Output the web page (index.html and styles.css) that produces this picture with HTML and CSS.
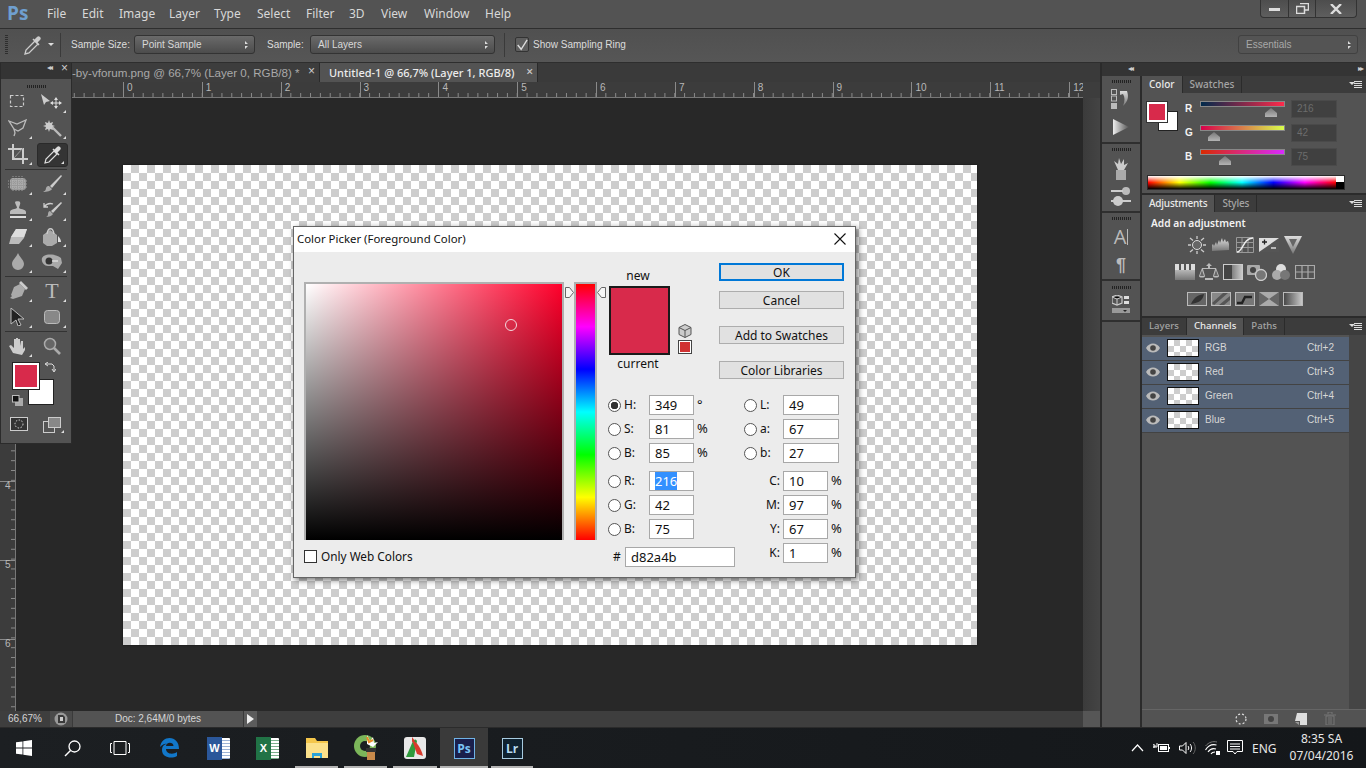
FILE: index.html
```html
<!DOCTYPE html>
<html lang="en">
<head>
<meta charset="utf-8">
<title>Photoshop Color Picker</title>
<link rel="stylesheet" href="styles.css">
</head>
<body>
<svg class="defs" aria-hidden="true"><defs>
<linearGradient id="gh"><stop offset="0" stop-color="#eee"/><stop offset="1" stop-color="#555"/></linearGradient>
<linearGradient id="gh2"><stop offset="0" stop-color="#444"/><stop offset="1" stop-color="#ccc"/></linearGradient>
<linearGradient id="gv" x2="0" y2="1"><stop offset="0" stop-color="#ddd"/><stop offset="1" stop-color="#777"/></linearGradient>
</defs></svg>
<div class="app">
  <header class="menubar">
    <span class="logo">Ps</span>
    <nav class="menu"><span>File</span><span>Edit</span><span>Image</span><span>Layer</span><span>Type</span><span>Select</span><span>Filter</span><span>3D</span><span>View</span><span>Window</span><span>Help</span></nav>
    <div class="winctl">
      <span class="wbtn w1"><svg width="11" height="4"><rect width="11" height="3" y="1" fill="#ddd"/></svg></span>
      <span class="wbtn w2"><svg width="13" height="11"><path d="M4 .5h8.500v6.500H9M.5 3.500h8v7h-8z" fill="none" stroke="#ddd" stroke-width="1.500"/></svg></span>
      <span class="wbtn w3"><svg width="12" height="10"><path d="M1 0l10 10M11 0L1 10" stroke="#ddd" stroke-width="2.400"/></svg></span>
    </div>
  </header>
  <div class="options">
    <span class="grip-v"></span>
    <svg class="opt-drop" width="22" height="22" viewBox="0 0 22 22"><path d="M3 20l1-4L13 7l3 3-9 9z" fill="none" stroke="#ccc" stroke-width="1.300"/><path d="M12 6l3-3c1-1 2-1 3 0s1 2 0 3l-3 3z" fill="#ccc"/><path d="M11 5l6 6" stroke="#ccc" stroke-width="1.500"/></svg>
    <span class="caret"></span>
    <span class="vsep s1"></span>
    <span class="olabel l1">Sample Size:</span>
    <span class="select sel1">Point Sample<i class="updown"></i></span>
    <span class="olabel l2">Sample:</span>
    <span class="select sel2">All Layers<i class="updown"></i></span>
    <span class="vsep s2"></span>
    <span class="ocheck"><svg width="14" height="14" viewBox="0 0 14 14"><path d="M2 7l4 5 7-11" fill="none" stroke="#ddd" stroke-width="1.600"/></svg></span>
    <span class="olabel l3">Show Sampling Ring</span>
    <span class="select essentials">Essentials<i class="updown"></i></span>
  </div>
  <div class="workspace">
    <main class="docarea">
      <div class="tabs">
        <span class="tab tab1">-by-vforum.png @ 66,7% (Layer 0, RGB/8) *<i class="tx">×</i></span>
        <span class="tab tab2">Untitled-1 @ 66,7% (Layer 1, RGB/8)<i class="tx">×</i></span>
      </div>
      <div class="hruler"><span>0</span><span>1</span><span>2</span><span>3</span><span>4</span><span>5</span><span>6</span><span>7</span><span>8</span><span>9</span><span>10</span><span>11</span><span>12</span></div>
      <div class="canvas-row">
        <div class="vruler"><span>0</span><span>1</span><span>2</span><span>3</span><span>4</span><span>5</span><span>6</span></div>
        <div class="canvas"><div class="doc"></div></div>
        <div class="vscroll"></div>
      </div>
      <footer class="status">
        <span class="zoomval">66,67%</span>
        <span class="st-ico"><svg width="14" height="14"><circle cx="7" cy="7" r="6.500" fill="#999"/><path d="M4 3h5l2 2v6H4z" fill="#3a3a3a"/><path d="M6 5h3v4H6z" fill="#ccc"/></svg></span>
        <span class="docsize">Doc: 2,64M/0 bytes</span>
        <span class="st-arrow"></span>
        <span class="st-rest"></span>
        <span class="st-corner"></span>
      </footer>
    </main>

    <aside class="dock">
      <div class="dock-top"><span class="tri-l">◂◂</span><span class="tri-r">▸▸</span></div>
      <div class="dock-body">
        <div class="iconcol">
          <div class="icgroup g1"><span class="grip"></span>
            <svg width="22" height="20" viewBox="0 0 22 20"><rect x="1.500" y=".5" width="5" height="5" fill="none" stroke="#bbb"/><rect x="1.500" y="7" width="5" height="5" fill="none" stroke="#bbb"/><rect x="1" y="14" width="6" height="6" fill="#bbb"/><path d="M10 2h7c2 6 1 10-4 15 2-5 2-9 0-12l-3 1z" fill="url(#gv)"/></svg>
            <svg class="mt4" width="18" height="16" viewBox="0 0 18 16"><path d="M1 0l16 8L1 16z" fill="url(#gh)"/></svg>
          </div>
          <div class="icgroup g2"><span class="grip"></span>
            <svg width="18" height="22" viewBox="0 0 18 22"><path d="M4 12h10v10H4z" fill="#aaa"/><path d="M6 12L2 3l4 3 1-6 2 6 3-5v6l4-2-4 7z" fill="#ccc"/></svg>
            <svg width="20" height="20" viewBox="0 0 20 20"><circle cx="15" cy="4" r="4" fill="#bbb"/><path d="M0 4h12M0 14h20" stroke="#ccc" stroke-width="2"/><circle cx="7" cy="14" r="5" fill="#ccc"/></svg>
          </div>
          <div class="icgroup g3"><span class="grip"></span>
            <span class="a-ico">A<i></i></span>
            <span class="pil">¶</span>
          </div>
          <div class="icgroup g4"><span class="grip"></span>
            <svg width="18" height="20" viewBox="0 0 18 20"><path d="M5 0l5 2v6l-5 2-5-2V2z" fill="none" stroke="#ccc" stroke-width="1.200"/><path d="M0 2l5 2 5-2M5 4v6" stroke="#ccc"/><rect x="12" y="1" width="5" height="3" fill="#ddd"/><rect x="12" y="6" width="5" height="3" fill="#ddd"/><rect y="13" width="18" height="5" fill="#999"/><path d="M11 15h4l-2 2z" fill="#222"/></svg>
          </div>
        </div>
        <div class="panels">
          <section class="panel colorp">
            <div class="ptabs"><span class="ptab on">Color</span><span class="ptab">Swatches</span><span class="pmenu"></span></div>
            <div class="pbody">
              <div class="csliders">
                <div class="cswatch"><span class="cfg"></span><span class="cbg"></span></div>
                <div class="crows">
                  <div class="crow"><b>R</b><span class="slider sr"><i class="th t1"></i></span><span class="cval">216</span></div>
                  <div class="crow"><b>G</b><span class="slider sg"><i class="th t2"></i></span><span class="cval">42</span></div>
                  <div class="crow"><b>B</b><span class="slider sb"><i class="th t3"></i></span><span class="cval">75</span></div>
                </div>
              </div>
              <div class="spectrum"><span class="spbw"></span></div>
            </div>
          </section>
          <section class="panel adjp">
            <div class="ptabs"><span class="ptab on">Adjustments</span><span class="ptab">Styles</span><span class="pmenu"></span></div>
            <div class="pbody adjbody">
              <div class="adjtitle">Add an adjustment</div>
              <div class="adjrow r1">
                <svg class="ai" viewBox="0 0 20 18"><circle cx="10" cy="9" r="4.500" fill="#666" stroke="#ddd"/><path d="M10 0v3M10 15v3M1 9h3M16 9h3M3 2l3 2.500M17 2l-3 2.500M3 16l3-2.500M17 16l-3-2.500" stroke="#ccc" stroke-width="1.300"/></svg>
                <svg class="ai" viewBox="0 0 20 18"><path d="M1 15V9l1-1 1 2 2-4 1 3 2-5 1 3 2-5 1 4 2-3 1 3 2-1 1 3v6z" fill="url(#gv)"/></svg>
                <svg class="ai" viewBox="0 0 20 18"><path d="M1.500 1.500h17v15h-17zM7 1v16M13 1v16M1 6.500h18M1 11.500h18" fill="none" stroke="#999"/><path d="M2 16c6 0 6-14 16-14" fill="none" stroke="#eee" stroke-width="1.400"/></svg>
                <svg class="ai" viewBox="0 0 20 18"><rect y="2" width="20" height="14" fill="#ddd"/><path d="M0 16L20 2v14z" fill="#555"/><path d="M3 6h5M5.500 3.500v5" stroke="#222" stroke-width="1.300"/><path d="M12 12h5" stroke="#eee" stroke-width="1.300"/></svg>
                <svg class="ai" viewBox="0 0 20 18"><path d="M1 0h18l-9 18z" fill="url(#gv)"/><path d="M6 3h8l-4 8z" fill="#666"/></svg>
              </div>
              <div class="adjrow r2">
                <svg class="ai" viewBox="0 0 20 18"><rect y="1" width="20" height="16" fill="url(#gv)"/><path d="M0 1h20v6H0z" fill="#ddd"/><path d="M5 1v6M10 1v6M15 1v6" stroke="#555" stroke-width="2"/></svg>
                <svg class="ai" viewBox="0 0 20 18"><path d="M10 0l3 3h-2v2h6l3 8c0 2-6 2-6 0l2-7H4l2 7c0 2-6 2-6 0l3-8h6V3H7z" fill="#bbb"/><path d="M3 7l-2 6h4zM17 7l-2 6h4z" fill="#666"/><rect x="6" y="15" width="8" height="2" fill="#bbb"/></svg>
                <svg class="ai" viewBox="0 0 20 18"><rect x=".5" y="1.500" width="19" height="15" fill="url(#gh2)" stroke="#ccc"/><rect x="1" y="2" width="8" height="14" fill="#444"/></svg>
                <svg class="ai" viewBox="0 0 20 18"><rect y="2" width="13" height="10" rx="1" fill="#aaa"/><circle cx="6" cy="7" r="3" fill="#444"/><circle cx="14" cy="12" r="5.500" fill="#777" stroke="#ccc" stroke-width="1.300"/></svg>
                <svg class="ai" viewBox="0 0 20 18"><circle cx="10" cy="6" r="5" fill="#ddd"/><circle cx="6" cy="12" r="5" fill="#aaa"/><circle cx="14" cy="12" r="5" fill="#777"/></svg>
                <svg class="ai" viewBox="0 0 20 18"><path d="M.5 2.500h19v13H.5zM7 2v14M13 2v14M0 9h20" fill="none" stroke="#aaa" stroke-width="1.200"/></svg>
              </div>
              <div class="adjrow r3">
                <svg class="ai" viewBox="0 0 20 18"><rect x=".5" y="2.500" width="19" height="13" fill="#666" stroke="#bbb"/><path d="M4 14C7 7 11 5 17 4c-1 6-5 9-13 10z" fill="#333"/></svg>
                <svg class="ai" viewBox="0 0 20 18"><rect x=".5" y="2.500" width="19" height="13" fill="#888" stroke="#bbb"/><path d="M1 13L12 3h5L3 15zM8 15L19 6v4l-6 5z" fill="#555"/></svg>
                <svg class="ai" viewBox="0 0 20 18"><rect x=".5" y="2.500" width="19" height="13" fill="#777" stroke="#bbb"/><path d="M2 13h5l3-6h7" fill="none" stroke="#222" stroke-width="2.400"/></svg>
                <svg class="ai" viewBox="0 0 20 18"><rect y="2" width="20" height="14" fill="#aaa"/><path d="M0 2l10 7L0 16zM20 2L10 9l10 7z" fill="#666"/></svg>
                <svg class="ai" viewBox="0 0 20 18"><rect x=".5" y="2.500" width="19" height="13" fill="url(#gh2)" stroke="#bbb"/></svg>
              </div>
            </div>
          </section>
          <section class="panel chanp">
            <div class="ptabs"><span class="ptab">Layers</span><span class="ptab on">Channels</span><span class="ptab">Paths</span><span class="pmenu"></span></div>
            <div class="chbody">
              <div class="chlist">
                <div class="chrow"><svg class="eye" width="14" height="10" viewBox="0 0 14 10"><path d="M0 5c3-6 11-6 14 0-3 6-11 6-14 0z" fill="#bbb"/><circle cx="7" cy="5" r="2.800" fill="#444"/></svg><span class="thumb"></span><span class="chname">RGB</span><span class="chkey">Ctrl+2</span></div>
                <div class="chrow"><svg class="eye" width="14" height="10" viewBox="0 0 14 10"><path d="M0 5c3-6 11-6 14 0-3 6-11 6-14 0z" fill="#bbb"/><circle cx="7" cy="5" r="2.800" fill="#444"/></svg><span class="thumb"></span><span class="chname">Red</span><span class="chkey">Ctrl+3</span></div>
                <div class="chrow"><svg class="eye" width="14" height="10" viewBox="0 0 14 10"><path d="M0 5c3-6 11-6 14 0-3 6-11 6-14 0z" fill="#bbb"/><circle cx="7" cy="5" r="2.800" fill="#444"/></svg><span class="thumb"></span><span class="chname">Green</span><span class="chkey">Ctrl+4</span></div>
                <div class="chrow"><svg class="eye" width="14" height="10" viewBox="0 0 14 10"><path d="M0 5c3-6 11-6 14 0-3 6-11 6-14 0z" fill="#bbb"/><circle cx="7" cy="5" r="2.800" fill="#444"/></svg><span class="thumb"></span><span class="chname">Blue</span><span class="chkey">Ctrl+5</span></div>
              </div>
              <div class="chscroll"></div>
            </div>
            <div class="chfoot">
              <svg width="14" height="14"><circle cx="7" cy="7" r="5" fill="none" stroke="#ddd" stroke-width="1.200" stroke-dasharray="2 2"/></svg>
              <svg width="14" height="12" class="f2"><rect width="14" height="10" y="1" fill="#777"/><circle cx="7" cy="6" r="3" fill="#444"/></svg>
              <svg width="12" height="12" class="f3"><path d="M2 0h10v12H5V8H0z" fill="#ddd"/><path d="M0 9h4v3z" fill="#999"/></svg>
              <svg width="12" height="13" class="f4"><path d="M0 3h12M4 2V0h4v2M2 4h8v9H2zM5 5v7M7 5v7" fill="none" stroke="#777"/></svg>
            </div>
          </section>
        </div>
      </div>
    </aside>
  </div>
  <div class="taskbar">
    <span class="tb"><svg width="16" height="16" viewBox="0 0 16 16"><path d="M0 2.300l6.500-.9v6.200H0zM7.300 1.300L16 0v7.600H7.300zM0 8.400h6.500v6.200L0 13.700zM7.300 8.400H16V16l-8.700-1.300z" fill="#fff"/></svg></span>
    <span class="tb"><svg width="17" height="17" viewBox="0 0 17 17"><circle cx="10.500" cy="6.500" r="5.500" fill="none" stroke="#fff" stroke-width="1.300"/><path d="M6.500 10.500L1 16" stroke="#fff" stroke-width="1.500"/></svg></span>
    <span class="tb"><svg width="20" height="14" viewBox="0 0 20 14"><path d="M4 .5h12v13H4zM2 2.500H.5v9H2M18 2.500h1.500v9H18" fill="none" stroke="#fff"/></svg></span>
    <span class="tb tb-edge"><svg width="20" height="20" viewBox="0 0 20 20"><path d="M1 9C2 3 6 0 10.500 0 16 0 20 4 20 11H7c0 5 7 6 11 3v4c-5 3-15 2-15-6 0-3 1-5 4-6 1-.500 2-.5 2-.5-3 0-6 1-8 3.500zM7 8h7.500c0-4-7-4.500-7.500 0z" fill="#1277c9"/></svg></span>
    <span class="tb"><span class="office word"><i class="oside">W</i></span></span>
    <span class="tb"><span class="office excel"><i class="oside">X</i></span></span>
    <span class="tb run"><svg width="22" height="20" viewBox="0 0 22 20"><path d="M0 0h9l2 3h11v17H0z" fill="#f4c64b"/><path d="M0 5h22v15H0z" fill="#fbe08a"/><path d="M6 15h10v5h-2v-2H8v2H6z" fill="#2aa3d8"/></svg></span>
    <span class="tb run"><svg width="24" height="26" viewBox="0 0 24 26"><circle cx="11" cy="11" r="11" fill="#7cb65a"/><circle cx="11" cy="11" r="5" fill="#1c1f22"/><path d="M13 0l3 6 3-4 1 6 4-1-5 5-6-3z" fill="#fff"/><path d="M13 2l2 5 4-2" fill="none" stroke="#e98a26" stroke-width="2"/><rect x="13" y="15" width="8" height="10" fill="#c88a4a"/><rect x="12" y="13" width="10" height="4" fill="#333"/></svg></span>
    <span class="tb tb-pic run"><svg width="22" height="22" viewBox="0 0 22 22"><rect width="22" height="22" rx="3" fill="#e8e8e8"/><path d="M2 20L9 4c2-2 3-2 4 0l-3 16z" fill="#2f9a3c"/><path d="M8 3c5 2 9 8 11 16l-6-2z" fill="#d83a2c"/><path d="M8 0l3 4-3 1z" fill="#d83a2c"/></svg></span>
    <span class="tb tb-active run"><span class="appbox ps">Ps</span></span>
    <span class="tb tb-lr run"><span class="appbox lr">Lr</span></span>
    <span class="tb-space"></span>
    <span class="tray">
      <svg width="13" height="8" viewBox="0 0 13 8"><path d="M1 7l5.500-6L12 7" fill="none" stroke="#fff" stroke-width="1.200"/></svg>
      <svg width="17" height="12" viewBox="0 0 17 12"><path d="M0 2v1h2v2H0M0 5h4V1" fill="none" stroke="#fff"/><rect x="5.500" y="2.500" width="10" height="7" fill="none" stroke="#fff"/><rect x="7" y="4" width="7" height="4" fill="#fff"/><path d="M16 5h1v2h-1" fill="#fff"/></svg>
      <svg width="17" height="14" viewBox="0 0 17 14"><path d="M.5 5h3l3.500-3.500v11L3.500 9h-3z" fill="none" stroke="#fff"/><path d="M9 5c1 1 1 3 0 4M11 3c2 2 2 6 0 8" fill="none" stroke="#fff"/><path d="M14 1c3 3 3 9 0 12" fill="none" stroke="#666"/></svg>
      <svg width="15" height="14" viewBox="0 0 15 14"><path d="M.5 9c3-5 7-6 11-5M3 11c2-3 5-4 8-3M6 13c1-2 3-2 4-2" fill="none" stroke="#fff" stroke-width="1.100"/><path d="M.5 5C4 1 8 0 12 1" fill="none" stroke="#777"/><rect x="11" y="10" width="4" height="4" fill="#fff"/></svg>
      <svg class="msg" width="16" height="16" viewBox="0 0 16 16"><path d="M.5.500h15v11H10L8 14l-2-2.500H.5z" fill="none" stroke="#fff"/><path d="M3 4h10M3 6.500h10M3 9h10" stroke="#fff"/></svg>
      <span class="eng">ENG</span>
      <span class="clock"><span>8:35 SA</span><span>07/04/2016</span></span>
    </span>
  </div>
</div>

<div class="tools">
  <div class="tools-top"><span>◂◂</span><span class="tcl">×</span></div>
  <span class="grip tg"></span>
  <div class="toolgrid">
    <span class="tool"><svg width="18" height="16"><rect x="1.500" y="1.500" width="13" height="11" fill="none" stroke="#ccc" stroke-width="1.200" stroke-dasharray="3 2"/></svg></span>
    <span class="tool more"><svg width="22" height="16" viewBox="0 0 22 16"><path d="M0 0l9 7-4 1-2 3z" fill="#ccc"/><path d="M15 4v10M10 9h10" stroke="#ddd"/><path d="M13 6l2-3 2 3zM13 12l2 3 2-3zM12 7l-3 2 3 2zM18 7l3 2-3 2z" fill="#ddd"/></svg></span>
    <span class="tool more"><svg width="20" height="18" viewBox="0 0 20 18"><path d="M1 2l8 3 9-4-3 8-5 3-4-2z" fill="none" stroke="#bbb" stroke-width="1.300"/><path d="M6 10l1 4-1 3" fill="none" stroke="#bbb" stroke-width="1.300"/></svg></span>
    <span class="tool more"><svg width="20" height="18" viewBox="0 0 20 18"><path d="M9 7l10 10" stroke="#bbb" stroke-width="2.400"/><path d="M7 1l1 3 3-1-1 3 3 1-3 1 1 3-3-1-1 3-1-3-3 1 1-3-3-1 3-1-1-3 3 1z" fill="#ccc"/></svg></span>
    <span class="tool more"><svg width="20" height="20" viewBox="0 0 20 20"><path d="M5 0v15h15M0 5h15v15" fill="none" stroke="#ccc" stroke-width="2"/><path d="M6 14L15 4" stroke="#999"/></svg></span>
    <span class="tool more active"><svg width="20" height="20" viewBox="0 0 20 20"><path d="M2 18l1-4 8-8 3 3-8 8z" fill="none" stroke="#ddd" stroke-width="1.200"/><path d="M11 5l3-3c1-1 2-1 3 0s1 2 0 3l-3 3z" fill="#ddd"/><path d="M10 4l6 6" stroke="#ddd" stroke-width="1.500"/></svg></span>
    <hr class="tsep first">
    <span class="tool more"><svg width="20" height="16" viewBox="0 0 20 16"><rect x="2" y="2" width="16" height="12" rx="3" fill="#999"/><path d="M0 5h20M0 8h20M0 11h20M5 0v16M8 0v16M11 0v16M14 0v16" stroke="#ccc" stroke-dasharray="1 1" opacity=".6"/></svg></span>
    <span class="tool more"><svg width="20" height="18" viewBox="0 0 20 18"><path d="M19 0L8 11l2 2L20 1z" fill="#ccc"/><path d="M7 11l3 3c-1 2-5 3-9 3 2-1 3-2 3-4 1-2 2-2 3-2z" fill="#aaa"/></svg></span>
    <span class="tool more"><svg width="18" height="18" viewBox="0 0 18 18"><path d="M6 1c0-1 5-1 5 0 1 2-1 4-1 6 0 1 7 1 7 4v2H1v-2c0-3 6-3 7-4 0-2-2-4-2-6z" fill="#bbb"/><rect x="1" y="15" width="16" height="2" fill="#ddd"/></svg></span>
    <span class="tool more"><svg width="20" height="18" viewBox="0 0 20 18"><path d="M19 1L9 10l2 2L20 2z" fill="#ccc"/><path d="M8 10l3 3c-1 2-4 3-7 3 2-1 2-2 2-3 0-2 1-3 2-3z" fill="#aaa"/><path d="M2 6c3-4 6-4 9-3M2 2v4h4" fill="none" stroke="#ccc" stroke-width="1.300"/></svg></span>
    <span class="tool more"><svg width="20" height="16" viewBox="0 0 20 16"><path d="M8 1h11l-3 9-5 6H1l2-7z" fill="#bbb"/><path d="M8 1L3 9h13l3-8z" fill="#ddd"/></svg></span>
    <span class="tool more"><svg width="20" height="20" viewBox="0 0 20 20"><path d="M1 9l7-5 7 5v8l-5 3H5L1 17z" fill="#aaa"/><path d="M5 8c1-7 6-7 7 0" fill="none" stroke="#ccc" stroke-width="1.300"/><path d="M16 10c2 2 3 4 3 6h-3z" fill="#ddd"/></svg></span>
    <span class="tool more"><svg width="14" height="18" viewBox="0 0 14 18"><path d="M7 0c2 5 6 7 6 11a6 6 0 0 1-12 0C1 7 5 5 7 0z" fill="#aaa"/></svg></span>
    <span class="tool more"><svg width="22" height="18" viewBox="0 0 22 18"><path d="M1 5c3-5 14-4 19 0l1 5-4 6-5-3H7C3 13 0 9 1 5z" fill="#aaa"/><circle cx="8" cy="8" r="3.500" fill="#333"/><path d="M11 8h6" stroke="#ddd" stroke-width="1.500"/></svg></span>
    <hr class="tsep">
    <span class="tool more"><svg width="20" height="20" viewBox="0 0 20 20"><path d="M12 3l5 5-3 7-9 3-3-1 5-5-3 3-1-1 3-8z" fill="#aaa"/><path d="M13 0l7 7-2 2-7-7z" fill="#ccc"/></svg></span>
    <span class="tool more ttext">T</span>
    <span class="tool more"><svg width="16" height="18" viewBox="0 0 16 18"><path d="M1 0l13 11H8l3 6-3 1-2-6-5 4z" fill="#222" stroke="#bbb"/></svg></span>
    <span class="tool more"><svg width="16" height="14" viewBox="0 0 16 14"><rect x=".5" y=".5" width="15" height="13" rx="3" fill="#888" stroke="#bbb"/></svg></span>
    <hr class="tsep">
    <span class="tool more"><svg width="18" height="18" viewBox="0 0 18 18"><path d="M4 16L0 9l2-1 3 3V2h2v6V1h2v7V2h2v7l1-5h2v8l2-2v3l-3 5z" fill="#ccc"/></svg></span>
    <span class="tool"><svg width="18" height="18" viewBox="0 0 18 18"><circle cx="7" cy="7" r="5.500" fill="#666" stroke="#aaa" stroke-width="1.500"/><path d="M11 11l6 6" stroke="#aaa" stroke-width="2.600"/></svg></span>
  </div>
  <div class="swatches">
    <span class="sw-bg"></span><span class="sw-fg"></span>
    <svg class="sw-swap" width="11" height="11" viewBox="0 0 11 11"><path d="M1 2h6l2 2v5M3 0L0 2l3 2M7 7l2 3 2-3" fill="none" stroke="#ddd"/></svg>
    <svg class="sw-def" width="11" height="11" viewBox="0 0 11 11"><rect x="3" y="3" width="8" height="8" fill="#aaa"/><rect x=".5" y=".5" width="6.500" height="6.500" fill="#111" stroke="#bbb"/></svg>
  </div>
  <div class="modes">
    <svg width="18" height="14" viewBox="0 0 18 14"><rect x=".5" y=".5" width="17" height="13" fill="#333" stroke="#ccc"/><circle cx="9" cy="7" r="4" fill="none" stroke="#ddd" stroke-dasharray="1.500 1.500"/></svg>
    <span class="more mscreen"><svg width="18" height="16" viewBox="0 0 18 16"><rect x=".5" y="4.500" width="11" height="11" fill="#555" stroke="#ccc"/><rect x="5.500" y=".5" width="12" height="10" fill="#888" stroke="#ccc"/></svg></span>
  </div>
</div>

<div class="dialog">
  <div class="dtitle"><span>Color Picker (Foreground Color)</span><svg width="12" height="12" viewBox="0 0 12 12"><path d="M.5.500l11 11M11.500.5l-11 11" stroke="#111" stroke-width="1.100"/></svg></div>
  <div class="dbody">
    <div class="dleft">
      <div class="dpick">
        <div class="field"><span class="handle"></span></div>
        <svg class="arrow ar" width="9" height="11" viewBox="0 0 9 11"><path d="M.5.500h4l4 5-4 5h-4z" fill="#f6f6f6" stroke="#666"/></svg>
        <div class="hue"></div>
        <svg class="arrow al" width="9" height="11" viewBox="0 0 9 11"><path d="M8.500.500h-4l-4 5 4 5h4z" fill="#f6f6f6" stroke="#666"/></svg>
      </div>
      <label class="webonly"><i class="cb"></i>Only Web Colors</label>
    </div>
    <div class="dright">
      <div class="dtop">
        <div class="newcur"><span>new</span><div class="ncbox"></div><span>current</span></div>
        <div class="warn">
          <svg width="14" height="14" viewBox="0 0 14 14"><path d="M7 .5l6 3v7l-6 3-6-3v-7z" fill="#ccc" stroke="#555"/><path d="M1 3.500l6 3 6-3M7 6.500v7" fill="none" stroke="#555"/></svg>
          <span class="websw"></span>
        </div>
        <div class="btns">
          <span class="btn ok">OK</span>
          <span class="btn">Cancel</span>
          <span class="btn b3">Add to Swatches</span>
          <span class="btn b3">Color Libraries</span>
        </div>
      </div>
      <div class="dfields">
        <div class="fcol fa">
          <div class="fr"><i class="rb on"></i><b>H:</b><span class="inp">349</span><em>°</em></div>
          <div class="fr"><i class="rb"></i><b>S:</b><span class="inp">81</span><em>%</em></div>
          <div class="fr"><i class="rb"></i><b>B:</b><span class="inp">85</span><em>%</em></div>
          <div class="fr gap"><i class="rb"></i><b>R:</b><span class="inp"><mark>216</mark></span></div>
          <div class="fr"><i class="rb"></i><b>G:</b><span class="inp">42</span></div>
          <div class="fr"><i class="rb"></i><b>B:</b><span class="inp">75</span></div>
          <div class="fr hexr"><b>#</b><span class="inp hex">d82a4b</span></div>
        </div>
        <div class="fcol fb">
          <div class="fr"><i class="rb"></i><b>L:</b><span class="inp w2">49</span></div>
          <div class="fr"><i class="rb"></i><b>a:</b><span class="inp w2">67</span></div>
          <div class="fr"><i class="rb"></i><b>b:</b><span class="inp w2">27</span></div>
          <div class="fr gap"><b class="cm">C:</b><span class="inp">10</span><em>%</em></div>
          <div class="fr"><b class="cm">M:</b><span class="inp">97</span><em>%</em></div>
          <div class="fr"><b class="cm">Y:</b><span class="inp">67</span><em>%</em></div>
          <div class="fr"><b class="cm">K:</b><span class="inp">1</span><em>%</em></div>
        </div>
      </div>
    </div>
  </div>
</div>
</body>
</html>
```
FILE: styles.css
```css
* { box-sizing: border-box; }
html, body { margin: 0; padding: 0; width: 1366px; height: 768px; overflow: hidden; }
body { background: #535353; color: #d6d6d6; font: 10px "Liberation Sans", sans-serif; position: relative; }
i, em { font-style: normal; }
b { font-weight: 400; }
.defs { position: absolute; width: 0; height: 0; }
.app { width: 1366px; height: 768px; display: flex; flex-direction: column; }

/* menu */
.menubar { height: 28px; flex: none; display: flex; align-items: center; background: #535353; }
.logo { width: 47px; padding: 0 0 2px 7px; font: 700 19px "Open Sans", sans-serif; color: #6f9fcf; }
.menu { display: flex; color: #d8d8d8; font: 12px "Noto Sans", sans-serif; padding-bottom: 2px; }
.menu span:nth-child(1) { width: 35px; }
.menu span:nth-child(2) { width: 37px; }
.menu span:nth-child(3) { width: 50px; }
.menu span:nth-child(4) { width: 45px; }
.menu span:nth-child(5) { width: 43px; }
.menu span:nth-child(6) { width: 49px; }
.menu span:nth-child(7) { width: 43px; }
.menu span:nth-child(8) { width: 32px; }
.menu span:nth-child(9) { width: 43px; }
.menu span:nth-child(10) { width: 61px; }
.winctl { margin-left: auto; margin-right: 9px; align-self: flex-start; display: flex; height: 18px; border: 1px solid #333; border-top: 0; border-radius: 0 0 4px 4px; background: linear-gradient(#4d4d4d, #5e5e5e); }
.wbtn { display: flex; align-items: center; justify-content: center; }
.wbtn + .wbtn { border-left: 1px solid #333; }
.w1 { width: 27px; } .w2 { width: 27px; } .w3 { width: 41px; }

/* options */
.options { height: 35px; flex: none; display: flex; align-items: center; padding-bottom: 2px; background: linear-gradient(#505050, #565656); border-top: 1px solid #2e2e2e; border-bottom: 1px solid #2e2e2e; }
.grip-v { width: 3px; height: 20px; margin-left: 5px; background: repeating-linear-gradient(#2e2e2e 0 1px, transparent 1px 2px); }
.opt-drop { margin-left: 14px; }
.caret { width: 0; height: 0; margin-left: 4px; border: 3px solid transparent; border-top: 3px solid #ddd; border-bottom: 0; }
.vsep { width: 1px; height: 24px; background: #3a3a3a; }
.s1 { margin-left: 6px; }
.olabel { color: #dcdcdc; white-space: nowrap; }
.l1 { margin-left: 10px; width: 63px; }
.select { height: 19px; display: flex; align-items: center; padding-left: 7px; border: 1px solid #333; border-radius: 3px; background: linear-gradient(#6a6a6a, #4c4c4c); color: #d8d8d8; position: relative; }
.sel1 { width: 121px; }
.l2 { margin-left: 12px; width: 43px; }
.sel2 { width: 185px; }
.s2 { margin-left: 9px; }
.ocheck { width: 14px; height: 15px; margin-left: 10px; display: flex; align-items: center; justify-content: center; border: 1px solid #333; border-radius: 2px; background: #5e5e5e; }
.l3 { margin-left: 4px; }
.essentials { margin-left: auto; margin-right: 8px; width: 120px; color: #a8a8a8; background: #545454; border-color: #414141; }
.updown { position: absolute; right: 6px; top: 5px; width: 6px; height: 8px; background: linear-gradient(#ddd 0 3px, transparent 3px 5px, #ddd 5px); clip-path: polygon(50% 0, 100% 37%, 0 37%, 0 63%, 100% 63%, 50% 100%); }

/* workspace */
.workspace { flex: 1; min-height: 0; display: flex; }
.docarea { width: 1100px; flex: none; display: flex; flex-direction: column; background: #3d3d3d; }
.tabs { height: 19px; flex: none; display: flex; background: #3a3a3a; font-size: 11.6px; }
.tab { display: flex; align-items: center; white-space: nowrap; position: relative; }
.tab1 { width: 320px; padding-left: 72px; color: #a9a9a9; background: #3d3d3d; border-right: 1px solid #2a2a2a; }
.tab2 { width: 218px; padding-left: 9px; color: #ececec; background: #535353; border-right: 1px solid #2a2a2a; font: 500 11px "Noto Sans", sans-serif; }
.tx { position: absolute; right: 4px; top: 0; font-size: 12px; line-height: 17px; color: #ccc; }
.hruler { height: 16px; width: 1083px; flex: none; display: flex; padding-left: 123px; color: #b8b8b8; font-size: 10px; line-height: 11px; border-bottom: 1px solid #777; background: linear-gradient(90deg, #8a8a8a 1px, transparent 1px) 123px 100% / 9.856px 4px repeat-x, #3c3c3c; overflow: hidden; }
.hruler span { flex: 0 0 78.85px; padding-left: 3px; border-left: 1px solid #8a8a8a; height: 15px; }
.canvas-row { flex: 1; min-height: 0; display: flex; }
.vruler { width: 16px; flex: none; padding-top: 67px; border-right: 1px solid #777; color: #b8b8b8; font-size: 10px; line-height: 7px; overflow: hidden; background: linear-gradient(#8a8a8a 1px, transparent 1px) 100% 7.8px / 4px 9.856px repeat-y, #3c3c3c; }
.vruler span { display: block; height: 79px; padding-left: 5px; border-top: 1px solid #8a8a8a; }
.canvas { flex: 1; background: #282828; padding: 67px 0 0 107px; }
.doc { width: 854px; height: 480px; background: repeating-conic-gradient(#cdcdcd 0 25%, #fff 0 50%) 0 0 / 16px 16px; box-shadow: 0 0 2px #111; }
.vscroll { width: 17px; flex: none; background: linear-gradient(90deg, #3b3b3b, #444); }
.status { height: 17px; flex: none; display: flex; border-bottom: 1px solid #2b2b2b; color: #d6d6d6; line-height: 16px; }
.zoomval { width: 50px; padding-left: 8px; background: #3e3e3e; }
.st-ico { width: 23px; display: flex; align-items: center; justify-content: center; background: #4a4a4a; border-right: 1px solid #3a3a3a; }
.docsize { width: 171px; text-align: center; background: #535353; border-right: 1px solid #383838; }
.st-arrow { width: 13px; background: #5c5c5c; position: relative; }
.st-arrow::after { content: ""; position: absolute; left: 3px; top: 3px; border: 5px solid transparent; border-left: 7px solid #eee; border-right: 0; }
.st-rest { flex: 1; background: #3e3e3e; }
.st-corner { width: 17px; background: #565656; }

/* dock */
.dock { width: 266px; flex: none; display: flex; flex-direction: column; background: #2b2b2b; padding-left: 2px; }
.dock-top { height: 13px; flex: none; display: flex; justify-content: space-between; padding: 0 2px 0 26px; font-size: 8px; line-height: 12px; color: #ccc; background: #343434; letter-spacing: -2px; }
.tri-r { padding-right: 2px; }
.dock-body { flex: 1; min-height: 0; display: flex; padding-bottom: 1px; }
.iconcol { width: 38px; flex: none; margin-right: 2px; background: #535353; }
.icgroup { display: flex; flex-direction: column; align-items: center; padding-top: 4px; gap: 6px; border-bottom: 2px solid #2f2f2f; }
.g1 { height: 68px; } .g2 { height: 69px; gap: 7px; } .g3 { height: 68px; } .g4 { height: 41px; padding-top: 5px; }
.mt4 { margin-top: 4px; }
.grip { display: block; width: 19px; height: 3px; background: repeating-linear-gradient(90deg, #222 0 1px, transparent 1px 2px); }
.a-ico { font: 20px/22px "Open Sans", sans-serif; color: #bbb; display: flex; gap: 1px; }
.a-ico i { width: 1px; height: 16px; margin-top: 3px; background: #bbb; }
.pil { font: 700 18px/18px "Liberation Sans", sans-serif; color: #bbb; margin-top: 2px; }
.panels { width: 224px; flex: none; display: flex; flex-direction: column; gap: 2px; }
.panel { background: #535353; display: flex; flex-direction: column; }
.colorp { height: 117px; flex: none; }
.adjp { height: 121px; flex: none; }
.chanp { flex: 1; min-height: 0; }
.ptabs { height: 17px; flex: none; display: flex; background: #3c3c3c; position: relative; font: 500 10px/16px "Noto Sans", sans-serif; }
.adjp .ptabs { letter-spacing: -.2px; }
.chanp .ptabs { font-size: 9.6px; }
.ptab { padding: 0 7px; color: #a4a4a4; border-right: 1px solid #2b2b2b; }
.ptab.on { background: #535353; color: #eaeaea; }
.pmenu { position: absolute; right: 4px; top: 5px; width: 8px; height: 7px; background: repeating-linear-gradient(#ddd 0 1px, transparent 1px 2px); }
.pmenu::before { content: ""; position: absolute; left: -5px; top: 1px; border: 3px solid transparent; border-top: 3px solid #ddd; border-bottom: 0; }
.colorp .pbody { padding: 7px 0 0 5px; }
.csliders { display: flex; height: 75px; }
.cswatch { width: 38px; position: relative; }
.cfg { position: absolute; left: 0; top: 2px; width: 20px; height: 20px; background: #d82a4b; border: 2px solid #fff; outline: 1px solid #333; z-index: 1; }
.cbg { position: absolute; left: 11px; top: 11px; width: 20px; height: 20px; background: #fff; border: 1px solid #222; }
.crows { display: flex; flex-direction: column; gap: 6px; }
.crow { display: flex; height: 18px; color: #f2f2f2; }
.crow b { width: 15px; line-height: 18px; font-weight: 700; font-size: 10px; }
.slider { width: 85px; height: 6px; margin-top: 1px; border: 1px solid #888; position: relative; }
.sr { background: linear-gradient(90deg, #002a4b, #ff2a4b); }
.sg { background: linear-gradient(90deg, #d8004b, #d8ff4b); }
.sb { background: linear-gradient(90deg, #d82a00, #d82aff); }
.th { position: absolute; top: 6px; width: 12px; height: 9px; background: linear-gradient(#777, #b4b4b4); clip-path: polygon(50% 0, 100% 55%, 100% 100%, 0 100%, 0 55%); }
.t1 { left: 64px; } .t2 { left: 7px; } .t3 { left: 18px; }
.cval { width: 46px; height: 18px; margin-left: 6px; padding-left: 5px; background: #404040; border: 1px solid #4a4a4a; color: #6c6c6c; line-height: 16px; }
.spectrum { width: 198px; height: 15px; display: flex; justify-content: flex-end; border: 1px solid #2b2b2b; background: linear-gradient(#fff, transparent 50%, #000), linear-gradient(90deg, #f00, #ff0 16%, #0f0 32%, #0ff 48%, #00f 64%, #f0f 80%, #f00 96%); }
.spbw { width: 8px; background: linear-gradient(#fff 50%, #000 50%); }
.adjbody { padding-top: 4px; }
.adjtitle { padding-left: 9px; color: #f2f2f2; font: 600 10.2px/15px "Noto Sans", sans-serif; height: 20px; }
.adjrow { display: flex; justify-content: center; gap: 4px; width: 206px; height: 18px; margin-bottom: 9px; }
.ai { width: 20px; height: 18px; }
.chbody { flex: 1; min-height: 0; display: flex; padding-top: 2px; }
.chlist { width: 207px; flex: none; }
.chscroll { flex: 1; margin-top: -2px; background: #454545; }
.chrow { height: 24px; display: flex; align-items: center; padding-bottom: 2px; background: #536175; border-bottom: 1px solid #434343; color: #d6d6d6; }
.eye { margin-left: 4px; width: 14px; }
.thumb { width: 32px; height: 18px; margin-left: 7px; border: 1px solid #111; background: repeating-conic-gradient(#cdcdcd 0 25%, #fff 0 50%) 0 0 / 12px 12px; }
.chname { margin-left: 6px; width: 102px; }
.chfoot { height: 18px; flex: none; display: flex; align-items: center; border-top: 1px solid #656565; padding-left: 92px; }
.f2 { margin-left: 16px; } .f3 { margin-left: 17px; } .f4 { margin-left: 17px; }

/* taskbar */
.taskbar { height: 40px; flex: none; display: flex; align-items: stretch; background: linear-gradient(90deg, #1c1f22, #14171a); color: #fff; font-family: "Noto Sans", sans-serif; }
.tb { width: 49px; display: flex; align-items: center; justify-content: center; position: relative; }
.tb:nth-child(1), .tb:nth-child(2), .tb:nth-child(3) { width: 48px; }
.tb.tb-edge, .tb.tb-pic { width: 50px; }
.tb.tb-active, .tb.tb-lr { width: 48px; }
.tb-active { background: #3a3a3a; }
.run::after { content: ""; position: absolute; left: 3px; right: 3px; bottom: 0; height: 2px; background: #b4b4b4; }
.tb-active.run::after { left: 0; right: 0; }
.office { width: 23px; height: 21px; display: block; position: relative; background: repeating-linear-gradient(#fff 0 2px, #9db4d6 2px 3px); border-radius: 1px; }
.oside { position: absolute; left: 0; top: -1px; width: 15px; height: 23px; color: #fff; font: 700 11px/23px "Liberation Sans", sans-serif; text-align: center; }
.word .oside { background: #2b579a; }
.excel { background: repeating-linear-gradient(#fff 0 2px, #7ab08c 2px 3px); }
.excel .oside { background: #217346; }
.appbox { width: 21px; height: 21px; display: flex; align-items: center; justify-content: center; font: 700 12px "Open Sans", sans-serif; border: 1px solid; }
.ps { background: #1a1f4c; border-color: #6fb3e6; color: #7ac3f5; }
.lr { background: #0f2230; border-color: #a7cbe0; color: #b7dbf0; }
.tb-space { flex: 1; }
.tray { display: flex; align-items: center; gap: 9px; padding-right: 12px; font-size: 12px; color: #e8e8e8; }
.msg { margin-left: -2px; }
.eng { width: 28px; }
.clock { display: flex; flex-direction: column; align-items: center; padding-bottom: 2px; line-height: 17px; width: 65px; }

/* floating tools */
.tools { position: absolute; left: 0; top: 63px; width: 72px; height: 381px; background: #535353; border: 1px solid #2b2b2b; border-width: 0 1px 1px 1px; }
.tools-top { height: 16px; background: #343434; display: flex; justify-content: flex-end; gap: 10px; padding: 0 3px 0 0; font-size: 8px; line-height: 10px; color: #ccc; letter-spacing: -2px; }
.tcl { font-size: 12px; letter-spacing: 0; }
.tg { margin: 6px auto 0; }
.toolgrid { display: grid; grid-template-columns: 34px 34px; padding-top: 1px; }
.tool { height: 26px; display: flex; align-items: center; justify-content: center; position: relative; }
.more::after { content: ""; position: absolute; right: 3px; bottom: 2px; border-style: solid; border-width: 0 0 3px 3px; border-color: transparent transparent #ddd transparent; }
.tool.active { height: 24px; margin: 2px 1px 0 2px; background: #343434; border: 1px solid #2a2a2a; border-radius: 3px; }
.tsep { grid-column: 1 / -1; width: 62px; height: 1px; margin: 1px 0 1px 4px; border: 0; background: #333; }
.tsep.first { margin-top: 2px; }
.ttext { font: 22px "Liberation Serif", serif; color: #bbb; }
.swatches { height: 48px; margin-top: 1px; position: relative; }
.sw-fg { position: absolute; left: 12px; top: 3px; width: 26px; height: 26px; background: #d82a4b; border: 2px solid #fff; outline: 1px solid #222; }
.sw-bg { position: absolute; left: 27px; top: 19px; width: 26px; height: 26px; background: #fff; border: 1px solid #222; }
.sw-swap { position: absolute; left: 44px; top: 2px; }
.sw-def { position: absolute; left: 11px; top: 35px; }
.modes { display: flex; gap: 15px; padding: 9px 0 0 9px; }
.mscreen { position: relative; width: 24px; height: 18px; display: block; }

/* dialog */
.dialog { position: absolute; left: 293px; top: 226px; width: 563px; height: 352px; background: #ececec; border: 1px solid #666; box-shadow: 2px 2px 6px rgba(0,0,0,.55); color: #111; font: 12px "Noto Sans", sans-serif; display: flex; flex-direction: column; }
.dtitle { height: 25px; flex: none; display: flex; align-items: center; justify-content: space-between; padding: 0 9px 2px 3px; background: #fff; font-size: 11.4px; }
.dbody { flex: 1; display: flex; }
.dleft { width: 314px; flex: none; padding: 30px 0 0 10px; }
.dpick { display: flex; height: 258px; }
.field { width: 260px; height: 258px; border: 2px solid #b0b0b0; border-bottom: 0; position: relative; background: linear-gradient(transparent, #000), linear-gradient(90deg, #fff, #ff002b); background-origin: padding-box; }
.handle { position: absolute; left: 199px; top: 35px; width: 12px; height: 12px; border: 1px solid #f2d8de; border-radius: 50%; }
.hue { width: 23px; height: 258px; border: 2px solid #b0b0b0; border-bottom: 0; background: linear-gradient(#f00, #f0f 16.7%, #00f 33.3%, #0ff 50%, #0f0 66.7%, #ff0 83.3%, #f00); }
.arrow { flex: none; margin-top: 5px; }
.ar { margin-left: 1px; }
.webonly { display: flex; align-items: center; gap: 4px; margin-top: 8px; height: 16px; font-size: 11.8px; }
.cb { width: 13px; height: 13px; border: 1px solid #333; background: #fff; }
.dright { flex: 1; display: flex; flex-direction: column; }
.dtop { height: 143px; flex: none; padding-top: 11px; display: flex; }
.newcur { width: 61px; display: flex; flex-direction: column; align-items: center; margin-left: 1px; line-height: 16px; padding-top: 5px; }
.newcur span { margin-right: 3px; }
.ncbox { width: 61px; height: 69px; margin: 2px 0 1px; background: #d82a4b; border: 2px solid #1a1a1a; flex: none; }
.warn { width: 49px; padding: 61px 0 0 8px; display: flex; flex-direction: column; align-items: flex-start; gap: 2px; }
.websw { width: 14px; height: 14px; border: 1px solid #444; background: #d03232; box-shadow: inset 0 0 0 1px #fff; }
.btns { width: 125px; display: flex; flex-direction: column; }
.btn { height: 18px; display: flex; align-items: center; justify-content: center; background: #e1e1e1; border: 1px solid #adadad; }
.btn.ok { border: 2px solid #0078d7; margin-bottom: 10px; }
.btn.b3 { margin-top: 17px; }
.dfields { display: flex; }
.fcol { display: flex; flex-direction: column; gap: 4px; }
.fa { width: 136px; }
.fr { height: 20px; display: flex; align-items: center; }
.fr.gap { margin-top: 4px; }
.fr b { width: 29px; padding: 0 0 2px 4px; flex: none; }
.rb { width: 13px; height: 13px; flex: none; border: 1px solid #555; border-radius: 50%; background: #fff; margin-right: -1px; }
.rb.on { background: radial-gradient(#333 0 3.500px, #fff 4px); }
.inp { width: 45px; height: 20px; border: 1px solid #a8a8a8; background: #fff; padding-left: 5px; line-height: 18px; flex: none; font-size: 13px; }
.inp.w2 { width: 56px; }
.fr em { margin-left: 3px; font-size: 13px; line-height: 16px; padding-bottom: 2px; }
.fb .fr b { width: 27px; }
.fb .fr b.cm { width: 39px; padding: 0 3px 2px 0; text-align: right; }
mark { background: #3390ff; color: #fff; }
.hexr { margin-top: 4px; }
.hexr b { width: 17px; padding-left: 5px; }
.inp.hex { width: 110px; }
```
